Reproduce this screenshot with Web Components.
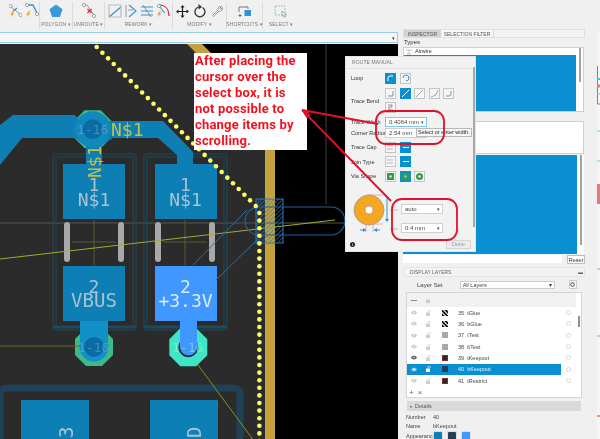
<!DOCTYPE html>
<html>
<head>
<meta charset="utf-8">
<style>
  html, body { margin: 0; background: #f0f0f0; font-family: "Liberation Sans", Arial, sans-serif; }
</style>
</head>
<body>
<app-shell>
  <tool-bar slot="toolbar"></tool-bar>
  <route-bar slot="bar"></route-bar>
  <pcb-canvas slot="canvas"></pcb-canvas>
  <inspector-panel slot="panel"></inspector-panel>
  <layers-panel slot="panel"></layers-panel>
  <side-strip slot="strip"></side-strip>
  <route-dialog slot="over"></route-dialog>
  <note-layer slot="over">After placing the<br>cursor over the<br>select box, it is<br>not possible to<br>change items by<br>scrolling.</note-layer>
</app-shell>

<script>
(() => {
  const bolt = (x, y) => `<path d="M${x + 3} ${y}l-3 3.5h2l-2 3 4.5-4h-2l2-2.5z" fill="#f5a21b"/>`;
  const tip = (x, y) => `<circle cx="${x}" cy="${y}" r="1.6" fill="#fff" stroke="#8a8a8a" stroke-width=".8"/>`;

  const icons = {
    routeA: `<svg width="13" height="16" viewBox="0 0 13 16"><path d="M1 3l11 9" stroke="#9a9a9a" fill="none"/><path d="M4 8l4-3" stroke="#2f93d6" stroke-width="1.3"/>${tip(1.5, 3)}${tip(11.5, 12)}${bolt(1, 8)}</svg>`,
    routeB: `<svg width="14" height="16" viewBox="0 0 14 16"><path d="M2 2h6l4 8" stroke="#2f93d6" stroke-width="1.3" fill="none"/>${tip(2, 2)}${tip(12, 11)}${bolt(1, 8)}</svg>`,
    polygon: `<svg width="14" height="14" viewBox="0 0 14 14"><path d="M7 .5l6.5 4.8-2.5 7.7H3L.5 5.300z" fill="#3a9ad9"/></svg>`,
    unroute: `<svg width="14" height="16" viewBox="0 0 14 16"><path d="M2 2l3 0 7 10" stroke="#9a9a9a" fill="none"/>${tip(2, 2)}${tip(12, 13)}<path d="M5.500 6l4 4m0-4l-4 4" stroke="#e0263c" stroke-width="1.300"/></svg>`,
    square: `<svg width="14" height="14" viewBox="0 0 14 14"><path d="M1 13V1h12" stroke="#bdbdbd" stroke-width="1.200" fill="none"/><path d="M1 13h0L13 3" stroke="#2f93d6" stroke-width="1.300" fill="none"/><path d="M13 1v12H1" stroke="#bdbdbd" stroke-width="1.200" fill="none"/></svg>`,
    arrow: `<svg width="12" height="14" viewBox="0 0 12 14"><path d="M1 1v12" stroke="#9a9a9a"/><path d="M4 1l7 6-7 6" stroke="#2f93d6" stroke-width="1.100" fill="none"/><path d="M3 6h5" stroke="#9a9a9a"/></svg>`,
    lines: `<svg width="14" height="14" viewBox="0 0 14 14"><path d="M1 3h12M1 7h12M1 11h12" stroke="#2f93d6" stroke-width="1.100"/><path d="M3 1l8 12" stroke="#777" stroke-width=".8"/></svg>`,
    arc: `<svg width="13" height="14" viewBox="0 0 13 14"><path d="M2 1c6 0 10 4 10 11" stroke="#c9363f" stroke-width="1.200" fill="none"/><path d="M2 2l6 7" stroke="#2f93d6" stroke-width="1.100"/>${tip(2, 2)}${bolt(0, 7)}</svg>`,
    move: `<svg width="13" height="13" viewBox="0 0 13 13"><path d="M6.500 1v11M1 6.500h11" stroke="#222" stroke-width="1.200"/><path d="M6.500 0l2 2.500h-4zM6.500 13l2-2.500h-4zM0 6.500l2.500-2v4zM13 6.500l-2.500-2v4z" fill="#222"/></svg>`,
    rotate: `<svg width="12" height="14" viewBox="0 0 12 14"><path d="M8.500 3.500a5 5 0 1 1-4-.5" stroke="#333" stroke-width="1.300" fill="none"/><path d="M4.500 0l3.500 3-3.500 2.500z" fill="#333"/></svg>`,
    wrench: `<svg width="12" height="13" viewBox="0 0 12 13"><path d="M1.500 10.500l5.500-5.500c-.7-2 1-4 3.500-3.500L8.700 3.300l1 1 1.800-1.800c.4 2.500-1.500 4-3.500 3.500L2.500 11.500z" fill="#fff" stroke="#8c8c8c" stroke-width=".9"/></svg>`,
    shortcuts: `<svg width="14" height="13" viewBox="0 0 14 13"><path d="M1 7V2h9v2" stroke="#777" stroke-width="1" fill="none"/><rect x="6.500" y="5" width="6.500" height="6" fill="#2f93d6"/><path d="M2 9v3M.5 10.500h3" stroke="#555" stroke-width=".8"/></svg>`,
    select: `<svg width="14" height="13" viewBox="0 0 14 13"><rect x="1" y="1" width="10" height="9" fill="none" stroke="#8fcfa5" stroke-dasharray="2 1"/><path d="M8 6l4.500 3.500-2 .3 1 2-1 .5-1-2-1.300 1z" fill="#fff" stroke="#777" stroke-width=".6"/></svg>`
  };

  class ToolGroup extends HTMLElement {
    constructor() {
      super();
      this.attachShadow({ mode: "open" });
      const names = (this.getAttribute("icons") || "").split(" ").filter(Boolean);
      this.shadowRoot.innerHTML = `
        <style>
          :host { display: flex; flex-direction: column; align-items: center; box-sizing: border-box; height: 27px; border-right: 1px solid #dcdcdc; margin-top: 2px; }
          .icons { display: flex; gap: var(--gap, 3px); align-items: center; height: 18px; }
          svg { display: block; }
          .label { font-size: 5px; color: #7a7a7a; line-height: 7px; margin-top: 1px; letter-spacing: .1px; white-space: nowrap; }
        </style>
        <div class="icons">${names.map((n) => icons[n]).join("")}</div>
        <div class="label">${this.getAttribute("label") || "&nbsp;"}</div>
      `;
    }
  }
  customElements.define("tool-group", ToolGroup);

  class ToolBar extends HTMLElement {
    constructor() {
      super();
      this.attachShadow({ mode: "open" });
      this.shadowRoot.innerHTML = `
        <style>
          :host { display: flex; height: 30px; background: #f0f0f0; }
          tool-group:nth-of-type(1) { width: 40px; padding-left: 8px; box-sizing: border-box; }
          tool-group:nth-of-type(2) { width: 33px; }
          tool-group:nth-of-type(3) { width: 32px; }
          tool-group:nth-of-type(4) { width: 68px; }
          tool-group:nth-of-type(5) { width: 54px; --gap: 5px; }
          tool-group:nth-of-type(6) { width: 36px; }
          tool-group:nth-of-type(7) { width: 36px; border: 0; }
        </style>
        <tool-group icons="routeA routeB"></tool-group>
        <tool-group icons="polygon" label="POLYGON ▾"></tool-group>
        <tool-group icons="unroute" label="UNROUTE ▾"></tool-group>
        <tool-group icons="square arrow lines arc" label="REWORK ▾"></tool-group>
        <tool-group icons="move rotate wrench" label="MODIFY ▾"></tool-group>
        <tool-group icons="shortcuts" label="SHORTCUTS ▾"></tool-group>
        <tool-group icons="select" label="SELECT ▾"></tool-group>
      `;
    }
  }
  customElements.define("tool-bar", ToolBar);

  class RouteBar extends HTMLElement {
    constructor() {
      super();
      this.attachShadow({ mode: "open" });
      this.shadowRoot.innerHTML = `
        <style>
          :host { display: flex; justify-content: flex-end; align-items: center; box-sizing: border-box; height: 11px; margin-top: 1px; padding-right: 2px; background: #f7f7f7; border: 1px solid #9ccfe3; border-left: 0; font-size: 5px; color: #333; }
        </style>
        ▾
      `;
    }
  }
  customElements.define("route-bar", RouteBar);

  class PcbCanvas extends HTMLElement {
    constructor() {
      super();
      this.attachShadow({ mode: "open" });

      let dots = "";
      for (let i = 0; i < 29; i++) {
        dots += `<circle cx="${96.7 + i * 5.68}" cy="${45 + i * 5.68}" r="2.3"/>`;
      }
      for (let y = 211; y < 442; y += 7.6) {
        dots += `<circle cx="259.400" cy="${y}" r="2.300"/>`;
      }

      const outline = (x) => `
        <rect x="${x}" y="152" width="83" height="176" rx="2" fill="none" stroke="#1e4a5f"/>
        <rect x="${x + 3}" y="155" width="77" height="170" fill="none" stroke="#1e4a5f"/>
        <path d="M${x} 325h83" stroke="#1e4a5f" stroke-width="3" />`;
      const bars = (x) => `
        <rect x="${x + 11}" y="220" width="6" height="40" rx="3" fill="#a9a9a9"/>
        <rect x="${x + 65}" y="220" width="6" height="40" rx="3" fill="#a9a9a9"/>
        <path d="M${x + 41} 218v45M${x + 19} 240h44" stroke="#5b5b30"/>`;
      const octagon = (cx, cy, r, fill) => {
        const k = r * 0.42;
        return `<path d="M${cx - k} ${cy - r}h${2 * k}l${r - k} ${r - k}v${2 * k}l${k - r} ${r - k}h${-2 * k}l${k - r} ${k - r}v${-2 * k}z" fill="${fill}"/>`;
      };

      this.shadowRoot.innerHTML = `
        <style>
          :host { display: block; flex: 1; min-height: 0; background: #000; overflow: hidden; }
          svg { display: block; }
          text { font-family: "DejaVu Sans Mono", monospace; }
        </style>
        <svg width="398" height="397" viewBox="0 42 398 397">
          <defs>
            <pattern id="hatch" width="3" height="3" patternUnits="userSpaceOnUse" patternTransform="rotate(45)">
              <path d="M0 0v3" stroke="#2f78b8" stroke-width="1.300"/>
            </pattern>
          </defs>
          <path d="M0 42h187l78 78v319H0z" fill="#2b2b2b"/>
          <path d="M187 42h15l73 73v324h-10V120z" fill="#c4a13c"/>
          <path d="M326 42v160" stroke="#2b2b2b" stroke-width="1.500"/>
          <path d="M0 221h345" stroke="#555"/>

          ${outline(53)}${outline(144)}
          ${bars(53)}${bars(144)}

          <rect x="0" y="386" width="240" height="60" rx="6" fill="none" stroke="#1f4256" stroke-width="7"/>
          <rect x="21" y="398" width="68" height="50" fill="#0e7fb5"/>
          <rect x="150" y="398" width="68" height="50" fill="#0e7fb5"/>
          <text transform="translate(73 436) rotate(-90)" font-size="19" fill="#a9c3d3">3</text>
          <text transform="translate(201 436) rotate(-90)" font-size="19" fill="#a9c3d3">D</text>

          ${octagon(92.700, 127.300, 19, "#3dbb87")}
          ${octagon(94, 345, 19, "#3dbb87")}
          ${octagon(188.300, 345.300, 19, "#3fe6c6")}

          <path d="M0 123l13-10h62l5 6h83l30 31v12h-16v-9l-19-17h-45l-11 7v19H86v-18l-11-8H22L0 163z" fill="#0e7fb5"/>
          <circle cx="92.700" cy="127.300" r="18" fill="#1289bd"/>
          <circle cx="92.700" cy="127.300" r="10" fill="#0c6ba3"/>

          <rect x="63" y="162" width="62" height="55" fill="#0e7fb5"/>
          <rect x="155" y="162" width="62" height="55" fill="#0e7fb5"/>
          <rect x="63" y="264" width="62" height="55" fill="#0e7fb5"/>
          <rect x="155" y="264" width="62" height="55" fill="#3f97ff"/>

          <path d="M80 319h28v26H80z" fill="#1290c8"/>
          <circle cx="94" cy="345" r="14.500" fill="#1290c8"/>
          <circle cx="94" cy="345" r="10" fill="#0c6ba3"/>
          <circle cx="188.300" cy="345.300" r="9.500" fill="#2b2b2b" stroke="#16313d"/>
          <path d="M180 319h17v26a8.500 8.500 0 0 1-17 0z" fill="#3f97ff"/>

          <g font-size="13" fill="#7fb7cf" opacity=".45">
            <text x="77" y="132">1-16</text>
            <text x="78" y="350">1-16</text>
          </g>
          <text x="172" y="350" font-size="13" fill="#9ff2df" opacity=".55">1-16</text>

          <g fill="#a9c3d3" font-size="18" text-anchor="middle">
            <text x="94" y="189">1</text>
            <text x="94" y="204">N$1</text>
            <text x="185.500" y="189">1</text>
            <text x="185.500" y="204">N$1</text>
            <text x="94" y="291">2</text>
            <text x="94" y="305" font-size="19">VBUS</text>
          </g>
          <g fill="#dfeaf6" font-size="18" text-anchor="middle">
            <text x="185.500" y="291">2</text>
            <text x="185.500" y="305">+3.3V</text>
          </g>
          <text x="111" y="134" font-size="18" fill="#c3c243">N$1</text>
          <text transform="translate(101 176) rotate(-90)" font-size="18" fill="#c3c243">N$1</text>

          <path d="M0 257l335-39" stroke="#a3ab2f" />
          <path d="M0 344h80" stroke="#66662c"/>
          <path d="M198 363l56 76" stroke="#8a8f2c"/>
          <path d="M193 263l54-55M216 278l42-41" stroke="#2a6ea8" fill="none"/>

          <rect x="256" y="197" width="27" height="44" fill="url(#hatch)" stroke="#2f78b8"/>
          <path d="M259 205h72a14 14 0 0 1 0 28h-72a14 14 0 0 1 0-28z" fill="none" stroke="#235f96" stroke-width="1.200"/>

          <g fill="#ffff66">${dots}</g>
        </svg>
      `;
    }
  }
  customElements.define("pcb-canvas", PcbCanvas);

  class ToggleBtn extends HTMLElement {
    constructor() {
      super();
      this.attachShadow({ mode: "open" });
      this.shadowRoot.innerHTML = `
        <style>
          :host { display: flex; align-items: center; justify-content: center; box-sizing: border-box; width: 11px; height: 11px; background: #f6f6f6; border: 1px solid #c4c4c4; }
          :host([on]) { background: #0a8fd2; border-color: #0a8fd2; }
          ::slotted(svg) { display: block; }
        </style>
        <slot></slot>
      `;
    }
  }
  customElements.define("toggle-btn", ToggleBtn);

  class DropBox extends HTMLElement {
    constructor() {
      super();
      this.attachShadow({ mode: "open" });
      // the tooltip sits over the corner radius arrow, so that box has none
      const arrow = this.hasAttribute("plain") ? "" : "<span>▾</span>";
      this.shadowRoot.innerHTML = `
        <style>
          :host { display: flex; align-items: center; justify-content: space-between; box-sizing: border-box; width: 42px; height: 10px; padding: 0 2px 0 3px; background: #fff; border: 1px solid #cfcfcf; font-size: 6px; color: #444; }
          :host([focus]) { border-color: #86c4e4; }
          span { font-size: 5px; }
        </style>
        <slot></slot>${arrow}
      `;
    }
  }
  customElements.define("drop-box", DropBox);

  const g = (d, c = "#8d8d8d") => `<svg width="9" height="9" viewBox="0 0 9 9"><path d="${d}" stroke="${c}" fill="none"/></svg>`;

  class RouteDialog extends HTMLElement {
    constructor() {
      super();
      this.attachShadow({ mode: "open" });
      this.shadowRoot.innerHTML = `
        <style>
          :host { position: absolute; left: 345px; top: 56px; width: 131px; height: 196px; box-sizing: border-box; background: #f2f2f2; border: 1px solid #e4e4e4; font-size: 5.500px; color: #333; display: block; white-space: nowrap; }
          .head { height: 9px; padding: 2px 0 0 6px; font-size: 5px; color: #777; letter-spacing: .1px; border-bottom: 1px solid #e2e2e2; }
          .grid { display: grid; grid-template-columns: 34px 1fr; padding: 4px 0 0 5px; align-items: center; }
          .btns { display: flex; gap: 3.500px; flex-wrap: wrap; width: 72px; }
          .wrap { row-gap: 3px; }
          .r1 { height: 15px; } .r3 { height: 10px; line-height: 10px; } .r4 { height: 14.500px; align-items: center; line-height: 14.500px; }
          .bar { position: absolute; right: 0; top: 10px; width: 2px; height: 160px; background: #a8a8a8; }
          .dia { display: flex; padding: 8px 0 0 5px; gap: 3px; }
          .sel { display: flex; flex-direction: column; gap: 9px; margin-top: 12.500px; }
          .foot { position: absolute; left: 0; right: 0; bottom: 0; height: 13px; display: flex; align-items: center; justify-content: space-between; padding: 0 4px; }
          .info { width: 5px; height: 5px; border-radius: 50%; background: #222; color: #fff; font-size: 4px; line-height: 5px; text-align: center; font-weight: bold; }
          .done { width: 23px; height: 7px; line-height: 7px; border: 1px solid #d5d5d5; background: #ececec; color: #9a9a9a; font-size: 5.500px; text-align: center; }
          .tooltip { position: absolute; left: 70px; top: 71px; height: 7px; padding: 0 1px; line-height: 7px; background: #f7f7f7; border: 1px solid #b9b9b9; font-size: 5.500px; white-space: nowrap; color: #222; z-index: 2; }
        </style>
        <div class="head">ROUTE MANUAL</div>
        <div class="grid">
          <div class="r1" style="line-height:11px">Loop</div>
          <div class="btns r1">
            <toggle-btn on>${g("M2 7V4a2 2 0 0 1 2-2h3", "#fff")}</toggle-btn>
            <toggle-btn>${g("M2 4a3 3 0 1 1 3 3", "#3a93d0")}</toggle-btn>
          </div>
          <div>Trace Bend</div>
          <div class="btns wrap">
            <toggle-btn>${g("M2 7h5V2")}</toggle-btn>
            <toggle-btn on>${g("M1 8l7-7", "#fff")}</toggle-btn>
            <toggle-btn>${g("M1 8l7-7", "#a5a5a5")}</toggle-btn>
            <toggle-btn>${g("M1 8l5-2 2-5", "#a5a5a5")}</toggle-btn>
            <toggle-btn>${g("M2 7h3a2 2 0 0 0 2-2V2")}</toggle-btn>
            <toggle-btn>${g("M2 2h4v2H3v3h4")}</toggle-btn>
          </div>
          <div class="r3" style="margin-top:4px">Trace Width</div>
          <drop-box focus style="margin-top:4px">0.4064 mm</drop-box>
          <div class="r3" style="margin-top:1px">Corner Radius</div>
          <drop-box plain style="margin-top:1px">2.54 mm</drop-box>
        </div>
        <div class="grid" style="padding-top:2px">
          <div class="r4">Trace Cap</div>
          <div class="btns r4">
            <toggle-btn>${g("M1 3h6M1 6h6", "#b5b5b5")}</toggle-btn>
            <toggle-btn on>${g("M2 4.500h6", "#fff")}</toggle-btn>
          </div>
          <div class="r4">Join Type</div>
          <div class="btns r4">
            <toggle-btn>${g("M1 3h6M1 6h6", "#b5b5b5")}</toggle-btn>
            <toggle-btn on>${g("M2 4.500h6", "#fff")}</toggle-btn>
          </div>
          <div class="r4">Via Shape</div>
          <div class="btns r4">
            <toggle-btn><svg width="7" height="7"><rect width="7" height="7" fill="#2f9e44"/><rect x="2.500" y="2.500" width="2" height="2" fill="#fff"/></svg></toggle-btn>
            <toggle-btn on><svg width="7" height="7"><rect width="7" height="7" fill="#2f9e44"/><circle cx="3.500" cy="3.500" r="1.200" fill="#7cc"/></svg></toggle-btn>
            <toggle-btn><svg width="7" height="7"><circle cx="3.500" cy="3.500" r="3.500" fill="#2f9e44"/><circle cx="3.500" cy="3.500" r="1.200" fill="#fff"/></svg></toggle-btn>
          </div>
        </div>
        <div class="dia">
          <svg width="46" height="44" viewBox="0 0 46 44" style="margin-left:1px">
            <path d="M15 3h16M17 32h14M14 22v18M21 22v18" stroke="#f29a9a" stroke-width=".8"/>
            <circle cx="17" cy="18" r="15" fill="#f5a623" stroke="#9a9a9a" stroke-width=".8"/>
            <circle cx="17" cy="18" r="4" fill="#fff" stroke="#8a8a8a" stroke-width=".6"/>
            <path d="M35 4v25" stroke="#2f93d6"/><path d="M33 27h4l-2 3z" fill="#2f93d6"/>
            <path d="M8 38h6M22 38h6" stroke="#2f93d6"/><path d="M14 38l-3-2v4zM22 38l3-2v4z" fill="#2f93d6"/>
            <path d="M38 18h8M38 37h8" stroke="#bbb"/>
          </svg>
          <div class="sel">
            <drop-box>auto</drop-box>
            <drop-box>0.4 mm</drop-box>
          </div>
        </div>
        <div class="foot"><div class="info">i</div><div class="done">Done</div></div>
        <div class="bar"></div>
        <div class="tooltip">Select or enter width.</div>
      `;
    }
  }
  customElements.define("route-dialog", RouteDialog);

  class NoteLayer extends HTMLElement {
    constructor() {
      super();
      this.attachShadow({ mode: "open" });
      this.shadowRoot.innerHTML = `
        <style>
          :host { position: absolute; inset: 0; display: block; pointer-events: none; z-index: 5; }
          .note { position: absolute; left: 194px; top: 53px; width: 113px; height: 97px; box-sizing: border-box; padding-left: 1px; background: #fff; color: #f2101e; font: bold 13px/16px Roboto, "Liberation Sans", sans-serif; letter-spacing: .2px; white-space: nowrap; }
          svg { position: absolute; left: 0; top: 0; }
        </style>
        <div class="note"><slot></slot></div>
        <svg width="600" height="439" fill="none" stroke="#e3102b">
          <path d="M378 124L302 110M391 201L302 110" stroke-width="1.800"/>
          <path d="M302 110l8 1-3 4z" fill="#e3102b" stroke-width="1"/>
          <path d="M302 110l5 8 3-3z" fill="#e3102b" stroke-width="1"/>
          <rect x="376" y="111" width="68" height="33" rx="10" stroke-width="1.800"/>
          <rect x="392" y="199" width="65" height="41" rx="10" stroke-width="1.800"/>
        </svg>
      `;
    }
  }
  customElements.define("note-layer", NoteLayer);

  class InspectorPanel extends HTMLElement {
    constructor() {
      super();
      this.attachShadow({ mode: "open" });
      this.shadowRoot.innerHTML = `
        <style>
          :host { display: block; width: 182px; height: 234px; font-size: 6px; color: #333; }
          .tabs { display: flex; height: 9px; background: #f3f3f3; border: 1px solid #e0e0e0; box-sizing: border-box; font-size: 5px; color: #555; line-height: 8px; text-align: center; }
          .tabs div:nth-child(1) { width: 37px; background: #d2d2d2; }
          .tabs div:nth-child(2) { width: 52px; background: #f8f8f8; border-right: 1px solid #dcdcdc; }
          .lab { height: 9px; line-height: 9px; padding-left: 1px; }
          .box { position: relative; box-sizing: border-box; width: 181px; border: 1px solid #cfcfcf; background: #fff; }
          .list { height: 65px; }
          .row { display: flex; align-items: center; gap: 3px; height: 7px; line-height: 7px; padding-left: 2px; font-size: 5.500px; }
          .row svg { display: block; }
          .fill { position: absolute; left: 0; right: 7px; background: #0a8fd2; }
          .sb { position: absolute; right: 2px; top: 0; width: 2px; background: #a3a3a3; }
          .band { height: 9px; }
          .mid { height: 33px; }
          .blue { height: 99px; border: 0; }
          .foot { display: flex; gap: 5px; justify-content: flex-end; height: 10px; padding-top: 1px; box-sizing: border-box; }
          .reset { width: 18px; height: 9px; line-height: 8px; box-sizing: border-box; background: #fff; border: 1px solid #bdbdbd; text-align: center; font-size: 5.500px; }
          .input { flex: 1; height: 8px; background: #fff; }
        </style>
        <div class="tabs"><div>INSPECTOR</div><div>SELECTION FILTER</div></div>
        <div class="lab">Types</div>
        <div class="box list">
          <div class="row"><svg width="6" height="6" viewBox="0 0 6 6"><path d="M0 1h6M3 1v5M1 5h4" stroke="#777" stroke-width=".6" stroke-dasharray="1 .6"/></svg>Airwire</div>
          <div class="fill" style="top:7px;bottom:0"></div>
          <div class="sb" style="height:34px"></div>
        </div>
        <div class="band"></div>
        <div class="box mid"></div>
        <div class="box blue" style="margin-top:1px">
          <div class="fill" style="top:0;bottom:0"></div>
          <div class="sb" style="height:90px"></div>
        </div>
        <div class="foot"><div class="input"></div><div class="reset">Reset</div></div>
      `;
    }
  }
  customElements.define("inspector-panel", InspectorPanel);

  const eye = (c) => `<svg width="6" height="5" viewBox="0 0 6 5"><path d="M0 2.500C1.500 0 4.500 0 6 2.500 4.500 5 1.500 5 0 2.500z" fill="${c}"/><circle cx="3" cy="2.500" r="1" fill="#fff" opacity=".6"/></svg>`;
  const lock = (c) => `<svg width="6" height="6" viewBox="0 0 6 6"><rect y="2.500" width="4" height="3.500" fill="${c}"/><path d="M2 2.500V1.200a1.200 1.200 0 0 1 2.400 0V2" stroke="${c}" stroke-width=".7" fill="none"/></svg>`;

  class LayerRow extends HTMLElement {
    constructor() {
      super();
      this.attachShadow({ mode: "open" });
      const on = this.hasAttribute("selected");
      const eyeColor = on ? "#9cc9e6" : this.hasAttribute("shown") ? "#555" : "#c9c9c9";
      const label = this.hasAttribute("num") ? `${this.getAttribute("num")}  ${this.getAttribute("name")}` : "";
      this.shadowRoot.innerHTML = `
        <style>
          :host { display: flex; align-items: center; height: 11.330px; font-size: 5.500px; color: #444; position: relative; white-space: pre; }
          :host([selected]) .main { background: #0a8fd2; color: #e8f5fc; }
          .main { display: flex; align-items: center; width: 154px; height: 100%; }
          .eye { width: 6px; margin-left: 4px; }
          .lock { width: 6px; margin-left: 9px; }
          .sw { box-sizing: border-box; width: 6px; height: 6px; margin-left: 10px; background: var(--sw, #aaa); border: var(--bd, 0); }
          .name { margin-left: 10px; }
          .radio { box-sizing: border-box; width: 5px; height: 5px; margin-left: 4.500px; border-radius: 50%; border: 1px solid #dadada; }
          svg { display: block; }
        </style>
        <div class="main">
          <div class="eye">${eye(eyeColor)}</div>
          <div class="lock">${lock(on ? "#fff" : "#cfcfcf")}</div>
          <div class="sw"></div>
          <div class="name">${label}</div>
        </div>
        <div class="radio"></div>
      `;
    }
  }
  customElements.define("layer-row", LayerRow);

  class LayersPanel extends HTMLElement {
    constructor() {
      super();
      this.attachShadow({ mode: "open" });
      const hatch = "repeating-linear-gradient(45deg,#111 0 1.500px,#bbb 1.500px 3px)";
      this.shadowRoot.innerHTML = `
        <style>
          :host { display: block; position: relative; width: 182px; margin-top: 4px; font-size: 6px; color: #444; }
          .head { display: flex; justify-content: space-between; align-items: center; height: 10px; box-sizing: border-box; padding: 0 1px 0 6px; background: #f3f3f3; border: 1px solid #e4e4e4; font-size: 5px; color: #666; }
          .set { display: flex; align-items: center; height: 15px; padding-left: 14px; }
          .sel { display: flex; justify-content: space-between; align-items: center; box-sizing: border-box; width: 95px; height: 8px; margin-left: 17px; padding: 0 2px; background: #fff; border: 1px solid #ccc; font-size: 5.500px; }
          .gear { box-sizing: border-box; width: 8px; height: 9px; margin-left: 14px; background: #f4f4f4; border: 1px solid #ccc; display: flex; align-items: center; justify-content: center; }
          .list { position: relative; box-sizing: border-box; width: 176px; height: 106px; margin-left: 3px; background: #fff; border: 1px solid #d5d5d5; overflow: hidden; }
          .top { display: flex; align-items: center; height: 14px; width: 169px; background: #f1f1f1; }
          .top i { display: block; width: 6px; height: 1px; background: #888; margin-left: 4px; }
          .top svg { margin-left: 9px; }
          .rows { height: 83px; overflow: hidden; }
          .sb { position: absolute; left: 171px; top: 23px; width: 2px; height: 11px; background: #8f8f8f; }
          .tools { position: absolute; left: 0; right: 0; bottom: 0; height: 8px; background: #fff; display: flex; align-items: center; gap: 4px; padding-left: 2px; color: #666; font-size: 8px; line-height: 8px; }
          .det { display: flex; align-items: center; gap: 3px; width: 174px; height: 10px; margin: 3px 0 0 4px; padding-left: 3px; box-sizing: border-box; background: #d9d9d9; font-size: 5.500px; color: #555; }
          .kv { display: flex; height: 9.500px; align-items: center; padding-left: 3px; font-size: 5.500px; }
          .kv b { font-weight: normal; width: 27px; }
          .app { display: flex; gap: 4px; }
          .app i { box-sizing: border-box; display: block; width: 10px; height: 10px; border-radius: 2px; border: 1px solid #ddd; }
        </style>
        <div class="head"><span>DISPLAY LAYERS</span><span>▬</span></div>
        <div class="set">Layer Set
          <div class="sel"><span>All Layers</span><span>▾</span></div>
          <div class="gear"><svg width="5" height="5"><circle cx="2.500" cy="2.500" r="1.800" fill="none" stroke="#555"/></svg></div>
        </div>
        <div class="list">
          <div class="top"><i></i><svg width="6" height="6" viewBox="0 0 6 6"><rect y="2.500" width="4" height="3.500" fill="#ccc"/></svg></div>
          <div class="rows">
            <layer-row num="35" name="tGlue" style="--sw:${hatch}"></layer-row>
            <layer-row num="36" name="bGlue" style="--sw:${hatch}"></layer-row>
            <layer-row num="37" name="tTest" style="--sw:#a9a9a9"></layer-row>
            <layer-row num="38" name="bTest" style="--sw:#a9a9a9"></layer-row>
            <layer-row num="39" name="tKeepout" shown style="--sw:#2a2a2a;--bd:1px solid #8a2a2a"></layer-row>
            <layer-row num="40" name="bKeepout" selected style="--sw:#263f52"></layer-row>
            <layer-row num="41" name="tRestrict" style="--sw:#2a2a2a;--bd:1px solid #8a2a2a"></layer-row>
            <layer-row style="--sw:#6a9cb8"></layer-row>
          </div>
          <div class="sb"></div>
          <div class="tools"><span>+</span><span>×</span></div>
        </div>
        <div class="det"><span style="font-size:4px">▾</span> Details</div>
        <div class="kv" style="margin-top:1px"><b>Number</b><span>40</span></div>
        <div class="kv"><b>Name</b><span>bKeepout</span></div>
        <div class="kv" style="margin-top:.5px"><b>Appearance</b>
          <div class="app"><i style="background:#0e7fb5"></i><i style="background:#263f52"></i><i style="background:#3f97ff"></i></div>
        </div>
      `;
    }
  }
  customElements.define("layers-panel", LayersPanel);

  class SideStrip extends HTMLElement {
    constructor() {
      super();
      this.attachShadow({ mode: "open" });
      this.shadowRoot.innerHTML = `
        <style>
          :host { display: block; width: 3px; height: 100%; background: #f5f5f5; }
          svg { display: block; }
        </style>
        <svg width="3" height="410" viewBox="0 29 3 410">
          <path d="M.5 65v38h3" stroke="#e05a5a" fill="none"/>
          <path d="M0 78h3" stroke="#22d3d3" stroke-width="2"/>
          <path d="M0 85h3" stroke="#d98080" stroke-width="3"/>
          <path d="M0 93h3M0 130h3M0 160h3" stroke="#8fc9a8"/>
          <path d="M0 183h3v20H0" fill="#e27b7b"/>
          <path d="M0 268h3M0 335h3" stroke="#a8a8a8"/>
          <path d="M0 415h3" stroke="#d33"/>
        </svg>
      `;
    }
  }
  customElements.define("side-strip", SideStrip);

  class AppShell extends HTMLElement {
    constructor() {
      super();
      this.attachShadow({ mode: "open" });
      this.shadowRoot.innerHTML = `
        <style>
          :host { display: flex; flex-direction: column; position: relative; width: 600px; height: 439px; overflow: hidden; background: #f0f0f0; filter: blur(.35px); }
          .main { display: flex; flex: 1; min-height: 0; }
          .left { display: flex; flex-direction: column; width: 398px; padding-top: 1px; box-sizing: border-box; }
          .gap { height: 1px; }
          .right { width: 182px; margin-left: 5px; margin-top: -1px; }
          .strip { margin-left: 12px; }
        </style>
        <slot name="toolbar"></slot>
        <div class="main">
          <div class="left"><slot name="bar"></slot><div class="gap"></div><slot name="canvas"></slot></div>
          <div class="right"><slot name="panel"></slot></div>
          <div class="strip"><slot name="strip"></slot></div>
        </div>
        <slot name="over"></slot>
      `;
    }
  }
  customElements.define("app-shell", AppShell);
})();
</script>
</body>
</html>
